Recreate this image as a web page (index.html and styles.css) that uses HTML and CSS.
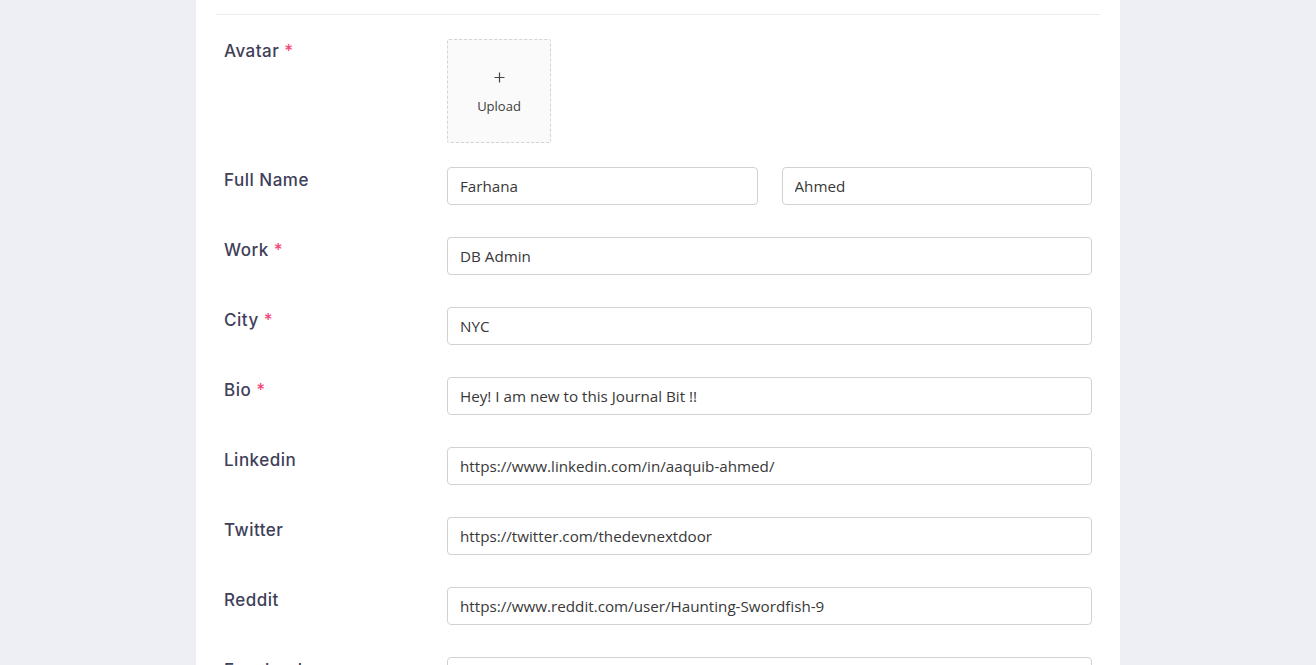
FILE: index.html
```html
<!DOCTYPE html>
<html>
<head>
<meta charset="utf-8">
<link rel="stylesheet" href="styles.css">
</head>
<body>
<div class="card">
  <div class="divider"></div>
  <form class="form">
    <div class="row avatar-row">
      <label class="label">Avatar <span class="req">*</span></label>
      <div class="control">
        <div class="upload">
          <svg class="plus" width="11" height="11" viewBox="0 0 11 11"><path d="M5.5 0.5v10M0.5 5.5h10" stroke="#444" stroke-width="1.2" fill="none"/></svg>
          <span class="upload-text">Upload</span>
        </div>
      </div>
    </div>
    <div class="row">
      <label class="label">Full Name</label>
      <div class="control split">
        <input class="input" value="Farhana">
        <input class="input" value="Ahmed">
      </div>
    </div>
    <div class="row">
      <label class="label">Work <span class="req">*</span></label>
      <div class="control"><input class="input" value="DB Admin"></div>
    </div>
    <div class="row">
      <label class="label">City <span class="req">*</span></label>
      <div class="control"><input class="input" value="NYC"></div>
    </div>
    <div class="row">
      <label class="label">Bio <span class="req">*</span></label>
      <div class="control"><input class="input" value="Hey! I am new to this Journal Bit !!"></div>
    </div>
    <div class="row">
      <label class="label">Linkedin</label>
      <div class="control"><input class="input" value="https://www.linkedin.com/in/aaquib-ahmed/"></div>
    </div>
    <div class="row">
      <label class="label">Twitter</label>
      <div class="control"><input class="input" value="https://twitter.com/thedevnextdoor"></div>
    </div>
    <div class="row">
      <label class="label">Reddit</label>
      <div class="control"><input class="input" value="https://www.reddit.com/user/Haunting-Swordfish-9"></div>
    </div>
    <div class="row">
      <label class="label">Facebook</label>
      <div class="control"><input class="input" value="https://www.facebook.com/"></div>
    </div>
  </form>
</div>
</body>
</html>
```

FILE: styles.css
```css
html, body {
  margin: 0;
  padding: 0;
  background: #eeeff4;
  overflow: hidden;
  height: 665px;
}
.card {
  width: 884px;
  margin: 0 auto;
  background: #ffffff;
  padding: 14px 20px 40px;
  min-height: 700px;
}
.divider {
  height: 1px;
  background: #ececec;
}
.form {
  padding-top: 24px;
}
.row {
  display: flex;
  align-items: flex-start;
  margin-bottom: 32px;
}
.avatar-row {
  margin-bottom: 24px;
}
.label {
  width: 231px;
  flex: none;
  padding-left: 8px;
  padding-top: 1px;
  box-sizing: border-box;
  font-family: "Inter", "Noto Sans", sans-serif;
  font-size: 17px;
  letter-spacing: 0.5px;
  line-height: 24px;
  color: #404059;
  font-weight: 500;
}
.avatar-row .label {
  line-height: 22px;
}
.req {
  color: #f5477a;
}
.control {
  width: 645px;
  flex: none;
}
.split {
  display: flex;
  gap: 24px;
}
.input {
  display: block;
  width: 100%;
  min-width: 0;
  height: 38px;
  box-sizing: border-box;
  border: 1px solid #cfd3d8;
  border-radius: 4px;
  padding: 0 12px;
  font-family: "Open Sans", sans-serif;
  font-size: 15.2px;
  color: #383838;
  background: #fff;
  outline: none;
}
.upload {
  width: 104px;
  height: 104px;
  box-sizing: border-box;
  border: 1px dashed #d4d4d4;
  border-radius: 2px;
  background: #fafafa;
  padding-top: 6px;
  display: flex;
  flex-direction: column;
  align-items: center;
  justify-content: center;
  font-family: "Open Sans", sans-serif;
  color: #3c3c3c;
}
.plus {
  display: block;
  margin-top: -2px;
}
.upload-text {
  font-size: 13px;
  margin-top: 14px;
  line-height: 18px;
}
```
